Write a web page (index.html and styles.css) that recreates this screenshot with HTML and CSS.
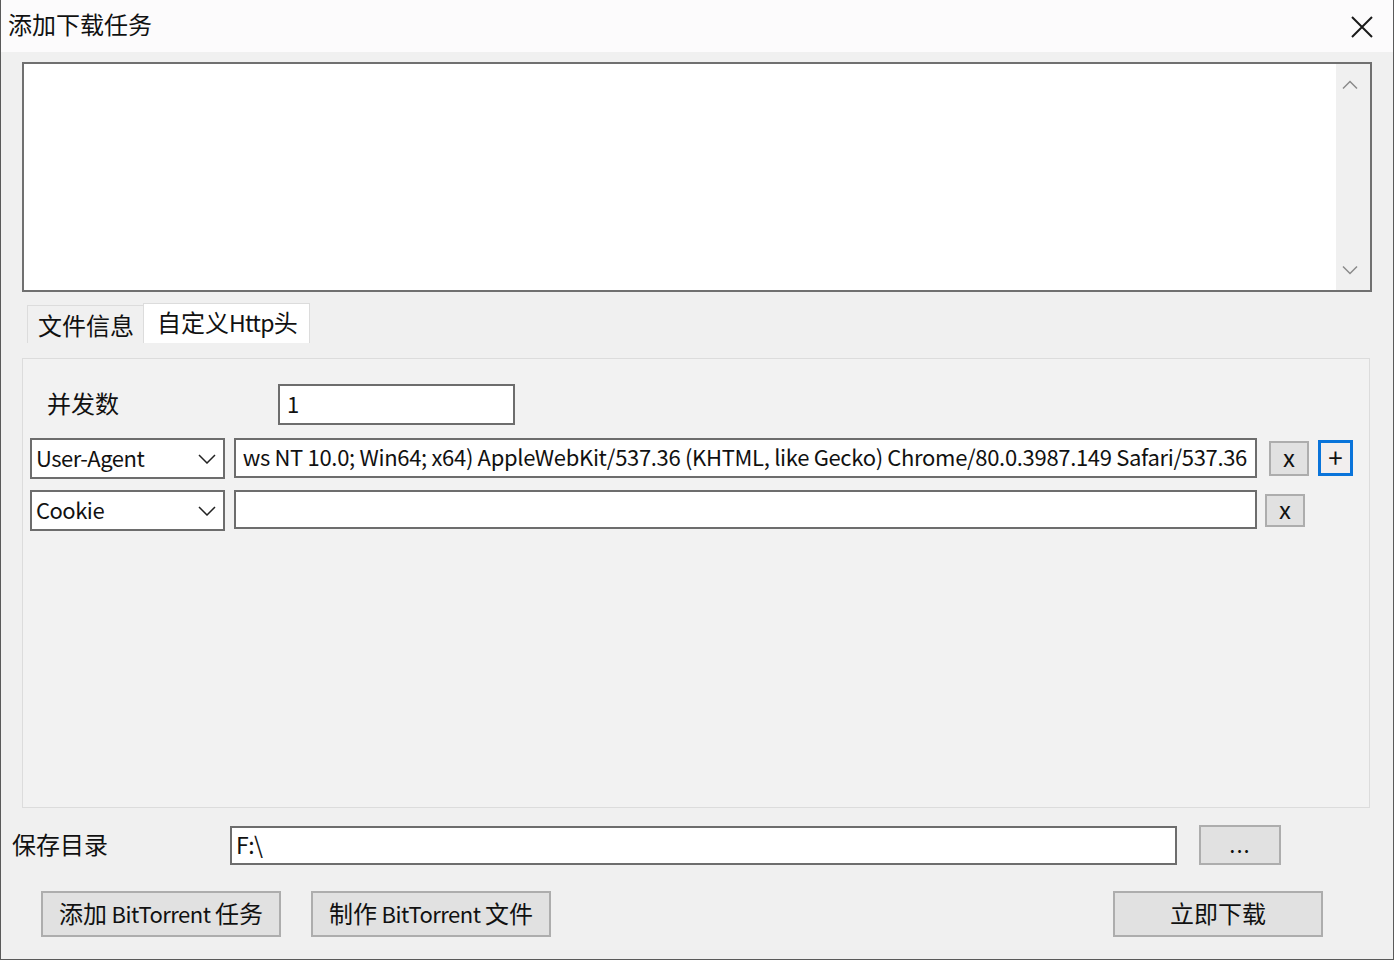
FILE: index.html
```html
<!DOCTYPE html>
<html lang="zh-CN">
<head>
<meta charset="utf-8">
<title>添加下载任务</title>
<link rel="stylesheet" href="styles.css">
</head>
<body>
<div class="window">
  <div class="titlebar">
    <span class="title">添加下载任务</span>
    <svg class="close" width="22" height="22" viewBox="0 0 22 22"><path d="M1 1L21 21M21 1L1 21" stroke="#1a1a1a" stroke-width="2" fill="none"/></svg>
  </div>
  <div class="body">
    <div class="urlbox">
      <div class="urlarea"></div>
      <div class="vscroll">
        <svg width="16" height="10" viewBox="0 0 16 10"><path d="M1 8.5L8 1.5L15 8.5" fill="none" stroke="#8a8a8a" stroke-width="1.5"/></svg>
        <svg width="16" height="10" viewBox="0 0 16 10"><path d="M1 1.5L8 8.5L15 1.5" fill="none" stroke="#8a8a8a" stroke-width="1.5"/></svg>
      </div>
    </div>

    <div class="tabs">
      <div class="tab"><span class="tabtext">文件信息</span></div>
      <div class="tab active"><span class="tabtext">自定义<span class="lat">Http</span>头</span></div>
    </div>

    <div class="panel">
      <div class="row conc">
        <span class="label conc-label">并发数</span>
        <div class="field conc-field"><span class="lat">1</span></div>
      </div>
      <div class="row hdr hdr1">
        <div class="select"><span class="lat">User-Agent</span><svg width="18" height="10" viewBox="0 0 18 10"><path d="M1 1L9 9L17 1" stroke="#222" stroke-width="1.5" fill="none"/></svg></div>
        <div class="field hval ua"><span class="uatext">ws NT 10.0; Win64; x64) AppleWebKit/537.36 (KHTML, like Gecko) Chrome/80.0.3987.149 Safari/537.36</span></div>
        <div class="btn xbtn xbtn1">x</div>
        <div class="btn plus">+</div>
      </div>
      <div class="row hdr hdr2">
        <div class="select"><span class="lat">Cookie</span><svg width="18" height="10" viewBox="0 0 18 10"><path d="M1 1L9 9L17 1" stroke="#222" stroke-width="1.5" fill="none"/></svg></div>
        <div class="field hval cookie"></div>
        <div class="btn xbtn xbtn2">x</div>
      </div>
    </div>

    <div class="saverow">
      <span class="label save-label">保存目录</span>
      <div class="field save-field"><span class="lat">F:\</span></div>
      <div class="btn browse">...</div>
    </div>

    <div class="actions">
      <div class="btn act act1">添加<span class="lat"> BitTorrent </span>任务</div>
      <div class="btn act act2">制作<span class="lat"> BitTorrent </span>文件</div>
      <div class="btn act act3">立即下载</div>
    </div>
  </div>
</div>
</body>
</html>
```

FILE: styles.css
```css
* { box-sizing: border-box; }
html, body { margin: 0; padding: 0; }
body {
  background: #f0f0f0;
  font-family: "Noto Sans CJK SC", "Noto Sans", sans-serif;
  font-size: 24px;
  color: #111;
}
.lat { font-size: 22px; letter-spacing: -0.5px; }
.window {
  width: 1394px;
  height: 960px;
  border: 1px solid #5a5a5a;
  border-top: none;
  background: #f0f0f0;
  display: flex;
  flex-direction: column;
  overflow: hidden;
}
.titlebar {
  height: 52px;
  background: #fcfbfc;
  display: flex;
  align-items: center;
  justify-content: space-between;
  padding: 0 20px 0 7px;
  flex: none;
}
.title { font-size: 24px; line-height: 1; margin-top: -4px; }
.close { display: block; margin-top: 1px; }

.body {
  padding: 0 21px 0 11px;
  display: flex;
  flex-direction: column;
  flex: 1;
}
.urlbox {
  margin: 10px 0 0 10px;
  height: 230px;
  border: 2px solid #707070;
  background: #fff;
  display: flex;
}
.urlarea { flex: 1; }
.vscroll {
  width: 34px;
  background: #f0f0f0;
  display: flex;
  flex-direction: column;
  justify-content: space-between;
  align-items: center;
  padding: 16px 6px 15px 0;
}
.vscroll svg { display: block; }

.tabs {
  display: flex;
  align-items: flex-end;
  margin: 10px 0 0 15px;
  height: 41px;
}
.tab {
  height: 38px;
  width: 116px;
  padding-left: 10px;
  display: flex;
  align-items: center;
  background: #f0f0f0;
  border: 1px solid #dcdcdc;
  border-bottom: none;
  border-right: none;
  line-height: 1;
  padding-top: 1px;
}
.tab.active {
  height: 40px;
  width: 167px;
  padding-left: 13px;
  padding-top: 0;
  padding-bottom: 4px;
  background: #fff;
  border-right: 1px solid #dcdcdc;
}
.tab .lat { font-size: 23px; letter-spacing: -0.8px; }

.panel {
  margin: 15px 2px 0 10px;
  height: 450px;
  border: 1px solid #dcdcdc;
  background: #f2f2f2;
  padding: 25px 0 0 7px;
  display: flex;
  flex-direction: column;
}
.row { display: flex; align-items: flex-start; }
.label { line-height: 1; }
.conc { height: 41px; align-items: center; }
.conc-label { width: 231px; margin-left: 17px; margin-top: -4px; }
.field {
  background: #fff;
  border: 2px solid #6d6d6d;
  display: flex;
  align-items: center;
  line-height: 1;
  white-space: nowrap;
  overflow: hidden;
}
.conc-field { width: 237px; height: 41px; padding: 0 0 3px 7px; }

.hdr { height: 41px; }
.hdr1 { margin-top: 13px; }
.hdr2 { margin-top: 11px; }
.select {
  width: 195px;
  height: 41px;
  background: #fff;
  border: 2px solid #6d6d6d;
  display: flex;
  align-items: center;
  justify-content: space-between;
  padding: 0 7px 0 4px;
  line-height: 1;
}
.select .lat { margin-top: -3px; }
.select svg { display: block; }
.hval { width: 1023px; margin-left: 9px; }
.ua { height: 40px; justify-content: flex-end; padding-right: 8px; }
.uatext { margin-top: -4px; font-size: 22px; letter-spacing: -0.32px; }
.cookie { height: 39px; }

.btn {
  background: #e1e1e1;
  border: 2px solid #adadad;
  display: flex;
  align-items: center;
  justify-content: center;
  line-height: 1;
  white-space: nowrap;
}
.xbtn { width: 40px; font-size: 24px; padding-bottom: 4px; }
.xbtn1 { height: 35px; margin: 3px 0 0 12px; }
.xbtn2 { height: 33px; margin: 4px 0 0 8px; }
.plus {
  width: 35px;
  height: 36px;
  margin: 2px 0 0 9px;
  border: 3px solid #0a74da;
  background: #f2eeee;
  font-size: 26px;
  padding-bottom: 3px;
}

.saverow {
  display: flex;
  align-items: center;
  margin-top: 17px;
  height: 41px;
}
.save-label { width: 218px; margin-top: -4px; }
.save-field { width: 947px; height: 39px; padding: 0 0 2px 4px; }
.save-field .lat { font-size: 23px; }
.browse { width: 82px; height: 40px; margin-left: 22px; margin-top: -2px; padding-bottom: 4px; font-size: 22px; letter-spacing: 1px; }

.actions {
  display: flex;
  margin-top: 25px;
}
.act { height: 46px; font-size: 24px; padding-bottom: 2px; }
.act .lat { white-space: pre; }
.act1 { width: 240px; margin-left: 29px; }
.act2 { width: 240px; margin-left: 30px; }
.act3 { width: 210px; margin-left: auto; margin-right: 49px; }
```
